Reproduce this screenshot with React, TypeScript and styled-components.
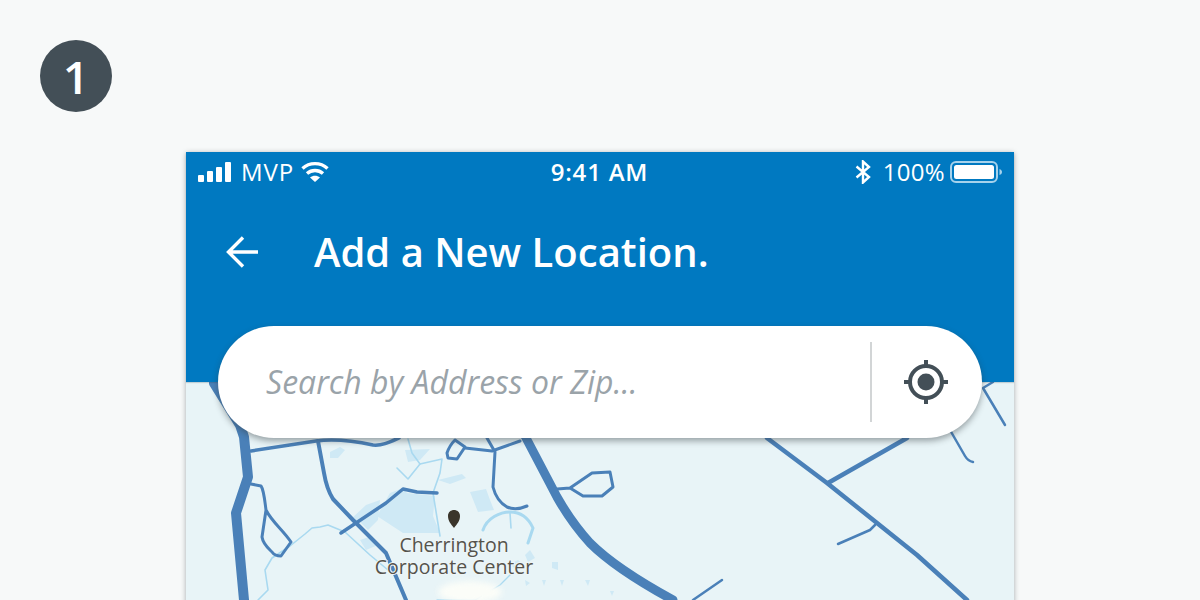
import React from "react";
import styled, { createGlobalStyle } from "styled-components";

const Global = createGlobalStyle`
  html, body { margin: 0; padding: 0; height: 100%; overflow: hidden; background: #f7f9f9; }
  body { font-family: "Open Sans", "Liberation Sans", sans-serif; }
`;

const Page = styled.div`
  width: 1200px;
  height: 600px;
  box-sizing: border-box;
  padding: 40px 186px 0 40px;
  overflow: hidden;
  background: #f7f9f9;
`;

const StepBadge = styled.div`
  width: 72px;
  height: 72px;
  border-radius: 50%;
  background: #434f57;
  color: #fff;
  font-size: 46px;
  font-weight: 600;
  line-height: 72px;
  text-align: center;
`;

const Phone = styled.div`
  position: relative;
  width: 828px;
  height: 600px;
  margin: 40px 0 0 146px;
  background: #e8f4f7;
  box-shadow: 0 1px 5px rgba(40, 50, 55, 0.4);
`;

const Header = styled.header`
  position: relative;
  height: 230px;
  background: #0079c1;
  color: #fff;
  box-shadow: 0 1px 1px rgba(40, 60, 80, 0.2);
`;

const StatusBar = styled.div`
  display: grid;
  grid-template-columns: 1fr auto 1fr;
  align-items: center;
  height: 39px;
  padding: 0 11px 0 12px;
  font-size: 24px;
  letter-spacing: 0.3px;
`;

const StatusGroup = styled.div<{ $end?: boolean }>`
  display: flex;
  align-items: center;
  gap: ${(p) => (p.$end ? 11 : 10)}px;
  justify-content: ${(p) => (p.$end ? "flex-end" : "flex-start")};
`;

const Carrier = styled.span`
  letter-spacing: 0.9px;
`;

const Clock = styled.div`
  font-weight: 600;
  letter-spacing: 0.8px;
  margin-right: 2px;
`;

const TitleRow = styled.div`
  display: flex;
  align-items: center;
  height: 80px;
  margin-top: 21px;
  padding-left: 40px;
  gap: 56px;
`;

const Title = styled.h1`
  margin: 0;
  font-size: 40px;
  font-weight: 600;
  line-height: 1;
`;

const SearchBar = styled.div`
  position: absolute;
  top: 174px;
  left: 32px;
  width: 764px;
  height: 112px;
  box-sizing: border-box;
  display: flex;
  align-items: center;
  padding: 0 34px 0 48px;
  background: #fff;
  border-radius: 56px;
  box-shadow: 0 3px 6px rgba(50, 60, 65, 0.45);
`;

const Placeholder = styled.div`
  flex: 1;
  color: #9aa3a9;
  font-size: 32px;
  font-style: italic;
  margin-top: -2px;
`;

const Divider = styled.div`
  width: 2px;
  height: 80px;
  margin-right: 32px;
  background: #d2d5d6;
`;

const MapCanvas = styled.svg`
  display: block;
  width: 828px;
  height: 218px;
`;

const MapArt = styled.g`
  filter: blur(0.6px);
`;

const Clearing = styled.ellipse`
  fill: #fbfdf8;
  filter: blur(3px);
`;

const MapLabel = styled.text`
  font-family: "Open Sans", sans-serif;
  font-size: 19.5px;
  fill: #55534c;
  text-anchor: middle;
  paint-order: stroke;
  stroke: #eef6f8;
  stroke-width: 2px;
`;

const Road = styled.path<{ $w: number }>`
  fill: none;
  stroke: #4a80b8;
  stroke-width: ${(p) => p.$w}px;
  stroke-linejoin: round;
  stroke-linecap: round;
`;

const Water = styled.path<{ $w?: number }>`
  fill: none;
  stroke: #a9d9f0;
  stroke-width: ${(p) => p.$w ?? 1.6}px;
  stroke-linejoin: round;
  stroke-linecap: round;
`;

const Pond = styled.path`
  fill: #cfe9f5;
`;

const roads: [string, number][] = [
  ["M214 383 L240 425 L244 437 L248 477 L236 513 L244 600", 10],
  ["M525 436 L557 497 C570 520 580 532 590 543 C610 563 640 582 673 600", 9],
  ["M251 451 L316 441 C330 439 350 440 373 445 C382 446 390 442 399 438", 3.5],
  ["M318 441 L324 473 C326 485 328 491 333 499 L353 520 L386 553 L406 600", 4],
  ["M341 533 L386 503 L403 489 L417 492 L437 493", 3.5],
  ["M251 484 L261 486 C264 490 265 503 266 510 C272 522 283 530 291 542 L281 556 C276 556 274 555 272 552 C268 548 263 544 262 537 L266 510", 3],
  ["M447 453 C449 447 452 443 455 440 L465 447 L457 459 L448 458 Z", 3],
  ["M465 448 L492 451 L520 441", 3],
  ["M487 438 L495 452 L493 487 C495 495 500 503 507 507 C514 510 520 509 527 506", 3],
  ["M557 489 L570 488 L592 473 L610 472 L613 487 L602 496 L583 496 L570 488", 3],
  ["M767 438 L827 483 L917 555 L967 600", 4.5],
  ["M828 483 L907 438", 4.5],
  ["M875 525 L870 530 L838 544", 2.5],
  ["M693 600 L722 580", 2.5],
  ["M950 430 L965 456 Q968 461 973 462", 2.5],
  ["M993 382 L983 388 L1005 425", 2.5],
];

const streams: [string, number][] = [
  ["M408 439 L412 453 L420 464 L408 479 L397 468", 1.6],
  ["M420 464 L442 459 L440 473 L433 493 L440 536", 1.6],
  ["M483 530 C487 518 500 512 510 512 C520 512 528 517 533 528 L528 543", 3],
  ["M510 513 L511 528", 1.6],
  ["M258 600 L268 590 L265 570 L272 558 L290 546 L305 534 L312 528 L320 527 L328 525 L345 532 L370 555 L388 570", 1.6],
  ["M437 600 L475 600 L500 585 L510 575", 1.4],
];

const ponds: string[] = [
  "M330 452 L340 447 L345 450 L338 458 L330 458 Z",
  "M390 493 L403 488 L407 493 L435 496 L433 516 L440 533 L403 533 L377 516 Z",
  "M350 520 L366 505 L380 500 L378 520 L368 530 L360 522 Z",
  "M360 540 L372 536 L378 545 L366 550 Z",
  "M470 492 L486 489 L490 500 L494 510 L478 512 Z",
  "M405 450 L430 449 L420 460 L408 462 Z",
  "M438 480 L462 474 L466 478 L450 484 Z",
  "M525 555 L530 550 L535 558 L528 562 Z",
  "M552 562 L558 562 L558 570 L552 568 Z",
  "M525 580 L530 583 L526 586 Z",
  "M542 580 L546 580 L544 586 Z",
  "M560 580 L564 580 L562 586 Z",
  "M585 580 L590 580 L588 586 Z",
  "M610 591 L614 591 L612 596 Z",
  "M510 564 L518 560 L524 565 L514 568 Z",
];

export default function App() {
  return (
    <Page>
      <Global />
      <StepBadge>1</StepBadge>
      <Phone>
        <Header>
          <StatusBar>
            <StatusGroup>
              <svg width="33" height="20" viewBox="0 0 33 20" fill="#fff">
                <rect x="0" y="13" width="6" height="7" rx="1" />
                <rect x="9" y="9" width="6" height="11" rx="1" />
                <rect x="18" y="5" width="6" height="15" rx="1" />
                <rect x="27" y="0" width="6" height="20" rx="1" />
              </svg>
              <Carrier>MVP</Carrier>
              <svg width="28" height="21" viewBox="0 0 28 21" fill="none" stroke="#fff" strokeWidth="3.4" style={{ marginLeft: -3 }}>
                <path d="M1.5 7.5 C8.5 1 19.5 1 26.5 7.5" />
                <path d="M6 12.5 C10.5 8.5 17.5 8.5 22 12.5" />
                <path d="M14 21 L9 16.5 C12 14.2 16 14.2 19 16.5 Z" fill="#fff" stroke="none" />
              </svg>
            </StatusGroup>
            <Clock>9:41 AM</Clock>
            <StatusGroup $end>
              <svg width="16" height="24" viewBox="0 0 16 24" fill="none" stroke="#fff" strokeWidth="2.4" style={{ marginRight: 1 }}>
                <path d="M1.5 6.5 L14 17 L8 22.5 V1.5 L14 7 L1.5 17.5" />
              </svg>
              <span>100%</span>
              <svg width="53" height="22" viewBox="0 0 53 22" style={{ marginLeft: -6 }}>
                <rect x="1" y="1" width="46" height="20" rx="5" fill="none" stroke="#a6d2ec" strokeWidth="2" />
                <rect x="4" y="4" width="40" height="14" rx="2.5" fill="#fff" />
                <path d="M49.5 8 C51 8.5 52 9.5 52 11 C52 12.5 51 13.5 49.5 14 Z" fill="#a6d2ec" />
              </svg>
            </StatusGroup>
          </StatusBar>
          <TitleRow>
            <svg width="32" height="32" viewBox="0 0 32 32" fill="none" stroke="#fff" strokeWidth="3.4">
              <path d="M32 16 H3 M17 1.5 L2.5 16 L17 30.5" />
            </svg>
            <Title>Add a New Location.</Title>
          </TitleRow>
        </Header>
        <MapCanvas viewBox="186 382 828 218">
          <MapArt>
            {ponds.map((d, i) => (
              <Pond key={i} d={d} />
            ))}
            {streams.map(([d, w], i) => (
              <Water key={i} d={d} $w={w} />
            ))}
            <Clearing cx="470" cy="592" rx="32" ry="11" />
            {roads.map(([d, w], i) => (
              <Road key={i} d={d} $w={w} />
            ))}
            <path
              d="M454 528 C451 524 448 521 448 516 C448 512 451 510 454 510 C457 510 460 512 460 516 C460 521 457 524 454 528 Z"
              fill="#3a352b"
            />
          </MapArt>
          <MapLabel x="454" y="552">Cherrington</MapLabel>
          <MapLabel x="454" y="574">Corporate Center</MapLabel>
        </MapCanvas>
        <SearchBar>
          <Placeholder>Search by Address or Zip...</Placeholder>
          <Divider />
          <svg width="44" height="44" viewBox="0 0 44 44" fill="none">
            <circle cx="22" cy="22" r="16" stroke="#434f57" strokeWidth="4" />
            <circle cx="22" cy="22" r="8.5" fill="#434f57" />
            <path d="M22 0 V8 M22 36 V44 M0 22 H8 M36 22 H44" stroke="#434f57" strokeWidth="4" />
          </svg>
        </SearchBar>
      </Phone>
    </Page>
  );
}
